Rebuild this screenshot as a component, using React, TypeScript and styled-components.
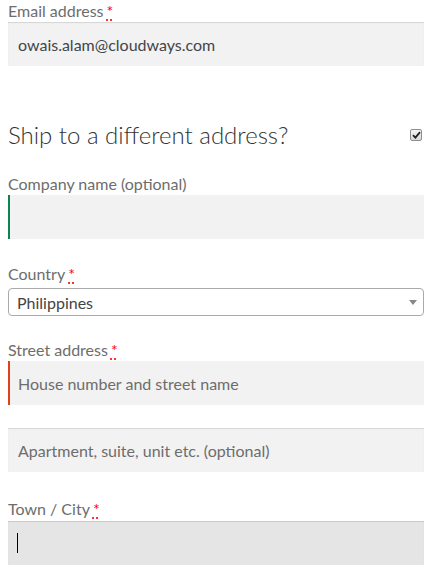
import React from 'react';
import styled, { createGlobalStyle, css } from 'styled-components';

const GlobalStyle = createGlobalStyle`
  html, body {
    margin: 0;
    padding: 0;
    background: #ffffff;
    overflow: hidden;
  }
  body {
    font-family: Lato, "Open Sans", "Liberation Sans", sans-serif;
    font-size: 16px;
    color: #6d6d6d;
  }
`;

type FieldState = 'default' | 'valid' | 'invalid' | 'focus';

const Page = styled.form`
  padding: 0 7px 0 8px;
`;

const Row = styled.div<{ $gap?: number }>`
  margin-bottom: ${p => (p.$gap ?? 24)}px;
`;

const Label = styled.label<{ $space?: number }>`
  display: block;
  line-height: 21px;
  font-size: 16px;
  margin-bottom: ${p => p.$space ?? 1}px;
  color: #6d6d6d;
`;

const Required = styled.abbr`
  color: #ff0000;
  text-decoration: underline dotted #ff0000;
  text-underline-offset: 3px;
  margin-left: 3px;
  cursor: help;
`;

const fieldCss = css<{ $state?: FieldState }>`
  display: block;
  box-sizing: border-box;
  width: 100%;
  height: 44px;
  padding: 0 10px;
  border: 0;
  outline: none;
  font-family: inherit;
  font-size: 16px;
  color: #43454b;
  background: ${p => (p.$state === 'focus' ? '#e6e5e5' : '#f2f2f2')};
  box-shadow: ${p =>
    p.$state === 'valid'
      ? 'inset 2px 0 0 #0f834d'
      : p.$state === 'invalid'
      ? 'inset 2px 0 0 #e2401c'
      : 'inset 0 1px 1px rgba(0, 0, 0, 0.125)'};

  &::placeholder {
    color: #6d6d6d;
    opacity: 1;
  }
`;

const Input = styled.input<{ $state?: FieldState }>`
  ${fieldCss}
`;

const FakeInput = styled.div<{ $state?: FieldState }>`
  ${fieldCss}
  display: flex;
  align-items: center;
`;

const Caret = styled.span`
  display: block;
  width: 1px;
  height: 20px;
  margin-left: -1px;
  background: #000000;
`;

const HeadingRow = styled.div`
  display: flex;
  align-items: center;
  justify-content: space-between;
  margin: 52px 0 21px;
`;

const Heading = styled.h3`
  margin: 0;
  font-size: 24px;
  line-height: 34px;
  font-weight: 300;
  color: #333333;
`;

const CheckBox = styled.span`
  display: flex;
  align-items: center;
  justify-content: center;
  box-sizing: border-box;
  width: 12px;
  height: 12px;
  margin-right: 2px;
  border: 1px solid #8f8f8f;
  border-radius: 2px;
  background: linear-gradient(#f4f4f4, #d8d8d8);
`;

const Select = styled.div`
  display: flex;
  align-items: center;
  justify-content: space-between;
  box-sizing: border-box;
  height: 28px;
  padding: 0 6px 0 8px;
  border: 1px solid #aaaaaa;
  border-radius: 4px;
  background: #ffffff;
  color: #444444;
  font-size: 16px;
`;

const Arrow = styled.span`
  width: 0;
  height: 0;
  border-left: 4px solid transparent;
  border-right: 4px solid transparent;
  border-top: 5px solid #888888;
`;

const App: React.FC = () => {
  return (
    <>
      <GlobalStyle />
      <Page onSubmit={e => e.preventDefault()}>
        <Row>
          <Label htmlFor="email">
            Email address<Required title="required">*</Required>
          </Label>
          <Input id="email" defaultValue="owais.alam@cloudways.com" />
        </Row>

        <HeadingRow>
          <Heading>Ship to a different address?</Heading>
          <CheckBox>
            <svg width="9" height="8" viewBox="0 0 9 8">
              <path d="M1 4.2 L3.4 6.6 L8 1.2" fill="none" stroke="#222" strokeWidth="1.8" />
            </svg>
          </CheckBox>
        </HeadingRow>

        <Row>
          <Label htmlFor="company">Company name (optional)</Label>
          <Input id="company" $state="valid" />
        </Row>

        <Row $gap={23}>
          <Label $space={4}>
            Country<Required title="required">*</Required>
          </Label>
          <Select>
            <span>Philippines</span>
            <Arrow />
          </Select>
        </Row>

        <Row $gap={23}>
          <Label htmlFor="street">
            Street address<Required title="required">*</Required>
          </Label>
          <Input id="street" $state="invalid" placeholder="House number and street name" />
        </Row>

        <Row $gap={26}>
          <Input placeholder="Apartment, suite, unit etc. (optional)" />
        </Row>

        <Row $gap={0}>
          <Label $space={2}>
            Town / City<Required title="required">*</Required>
          </Label>
          <FakeInput $state="focus">
            <Caret />
          </FakeInput>
        </Row>
      </Page>
    </>
  );
};

export default App;
